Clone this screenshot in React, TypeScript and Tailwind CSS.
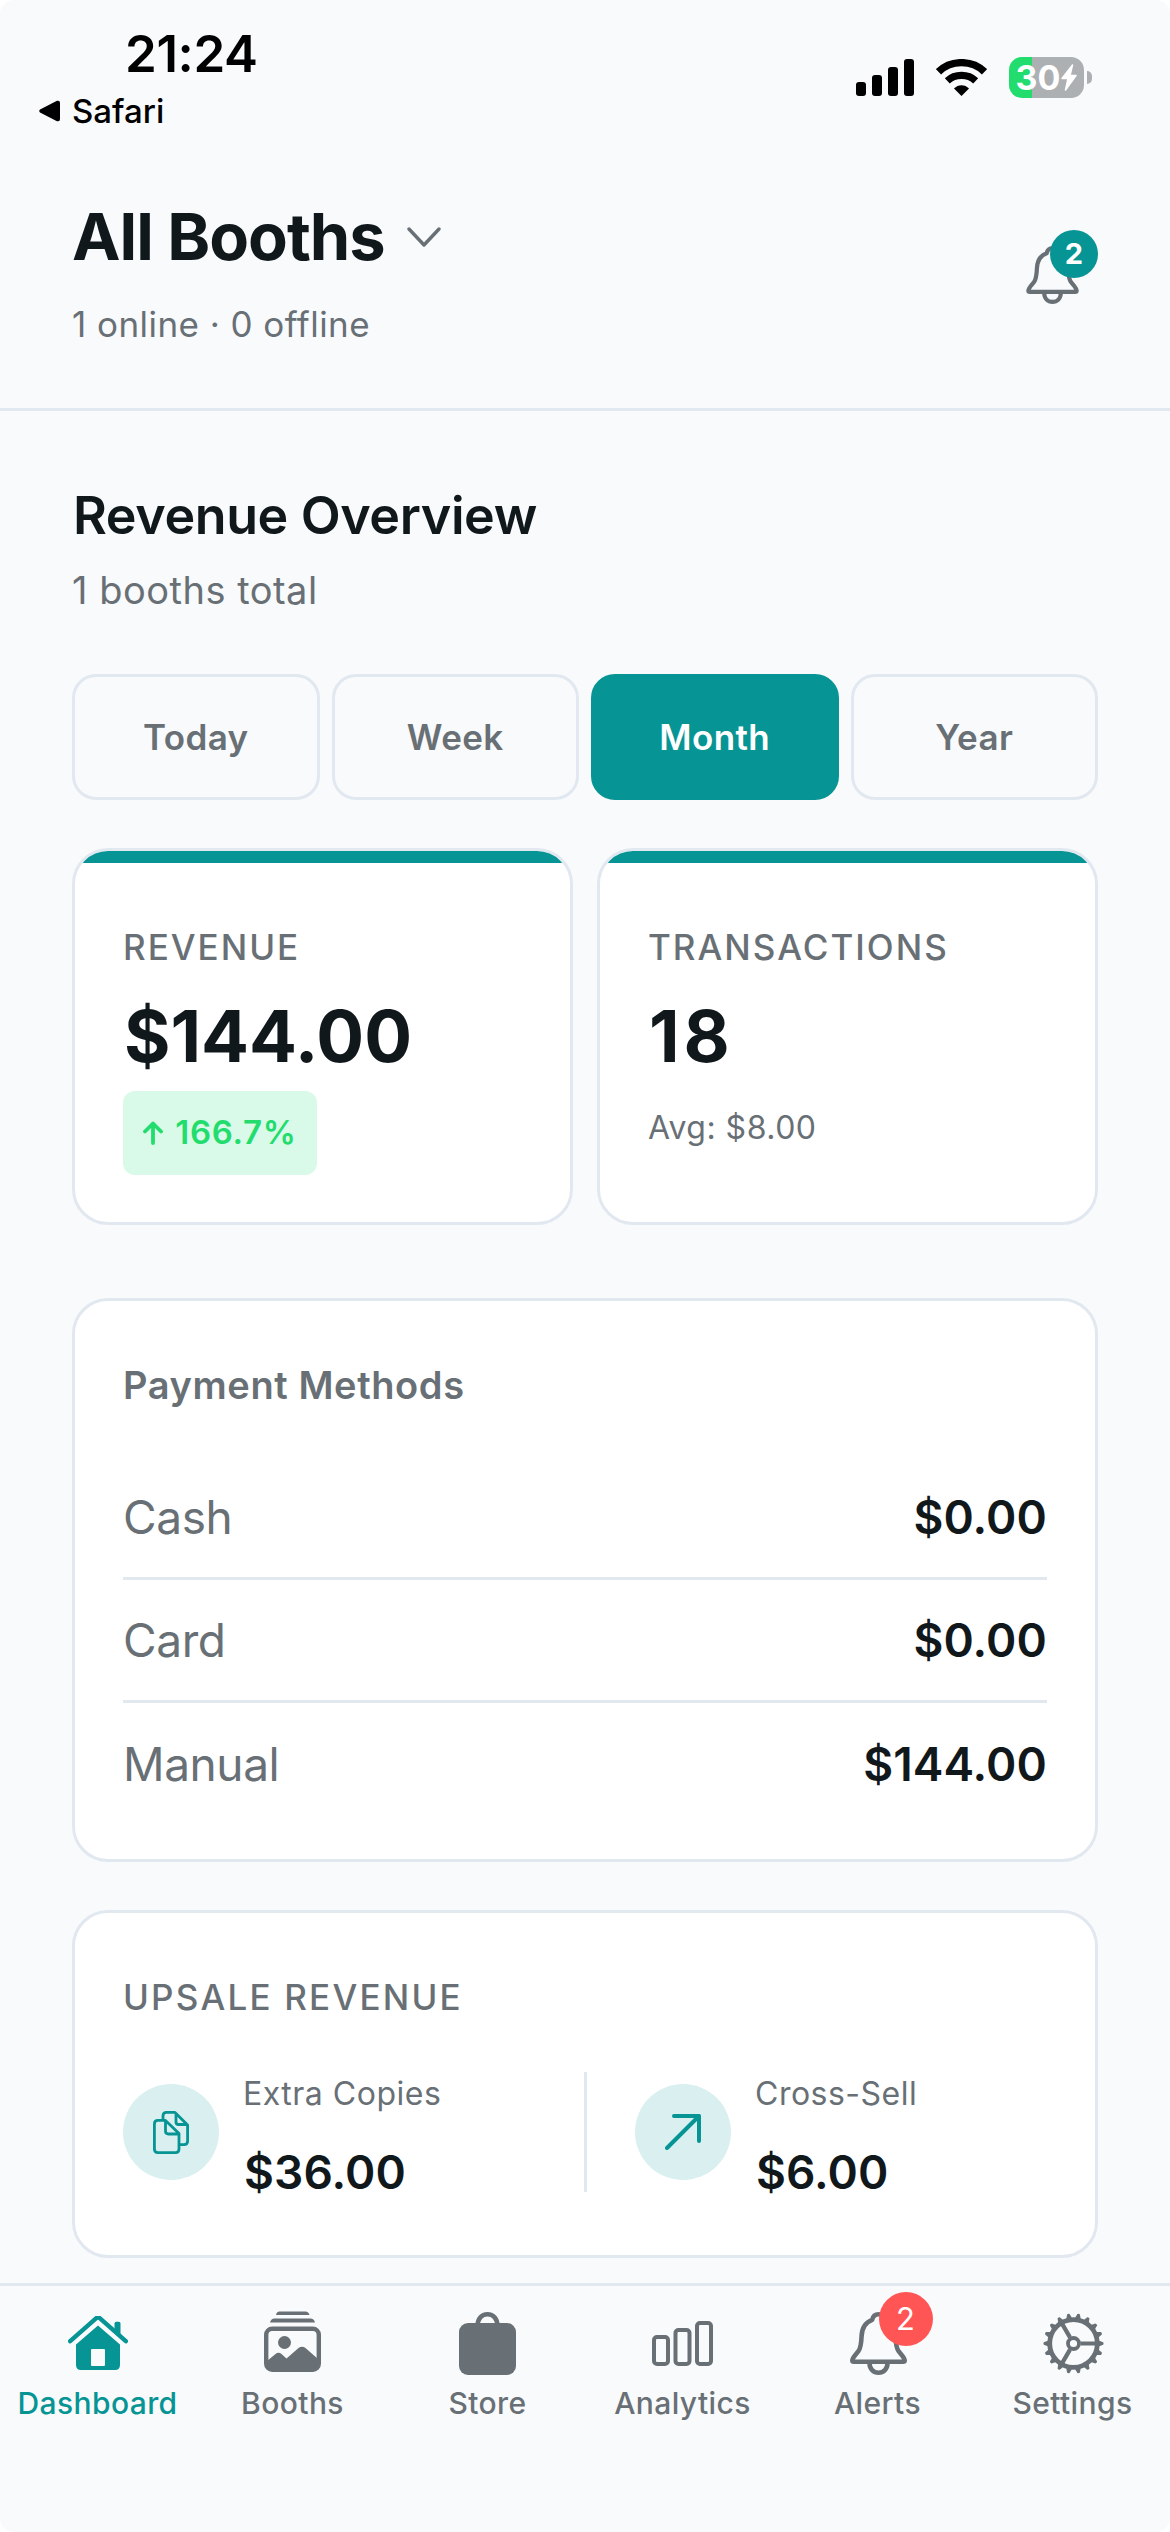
import type { ReactNode } from "react"


const periods = ["Today", "Week", "Month", "Year"]

const payments = [
  { label: "Cash", amount: "$0.00" },
  { label: "Card", amount: "$0.00" },
  { label: "Manual", amount: "$144.00" },
]


function BellIcon({ className }: { className: string }) {
  return (
    <svg viewBox="0 0 57 63" className={className} fill="none" stroke="currentColor" strokeWidth="4.600" strokeLinejoin="round">
      <path d="M28.500 2.300C25 2.300 23 4.300 22.200 7.800C14.500 10.500 12 16.500 11.600 24C11.300 31 11 35.500 8.500 39C6.500 42 2.300 45.500 2.300 48.500Q2.300 49.800 4 49.800H53Q54.700 49.800 54.700 48.500C54.700 45.500 50.500 42 48.500 39C46 35.500 45.700 31 45.400 24C45 16.500 42.500 10.500 34.800 7.800C34 4.300 32 2.300 28.500 2.300Z" />
      <path d="M19.500 51C19.500 57 23.500 60.700 28.500 60.700S37.500 57 37.500 51" />
    </svg>
  )
}


function HomeIcon() {
  return (
    <svg viewBox="0 0 60 54" className="h-[54px] w-[60px]" fill="currentColor">
      <path d="M2.200 25.200L28 2.400Q30 0.800 32 2.400L57.800 25.200" fill="none" stroke="currentColor" strokeWidth="4.400" strokeLinecap="round" strokeLinejoin="round" />
      <path d="M46.500 14V7.500Q46.500 5.800 48.200 5.800H50.800Q52.500 5.800 52.500 7.500V20Z" />
      <path fillRule="evenodd" d="M30 9.500L52 28.500V49Q52 54 47 54H13Q8 54 8 49V28.500ZM24 33Q23 33 23 34V49Q23 50 24 50H36Q37 50 37 49V34Q37 33 36 33Z" />
    </svg>
  )
}


function BoothsIcon() {
  return (
    <svg viewBox="0 0 57 61" className="-mt-[4px] h-[61px] w-[57px]" fill="currentColor">
      <path d="M12 4Q12.500 0.500 15.500 0.500H41.500Q44.500 0.500 45.500 4Z" />
      <path d="M6 11.500Q7 7.500 10.500 7.500H46.500Q50 7.500 51 11.500Z" />
      <rect x="2.200" y="17.800" width="52.600" height="41" rx="6" fill="none" stroke="currentColor" strokeWidth="4.400" />
      <circle cx="20.500" cy="31.500" r="6.500" />
      <path d="M3 50L11.500 43Q14.500 40.500 17.500 43L22.500 47.500L34.500 37Q38 34.500 41.500 37L54 48V55L50 59H7L3 55Z" />
    </svg>
  )
}


function BagIcon() {
  return (
    <svg viewBox="0 0 57 63" className="h-[63px] w-[57px]">
      <path d="M18.500 14C18.500 7 22.500 2.300 28.500 2.300S38.500 7 38.500 14" fill="none" stroke="currentColor" strokeWidth="4.600" />
      <rect y="11" width="57" height="52" rx="9" fill="currentColor" />
    </svg>
  )
}


function ChartIcon() {
  return (
    <svg viewBox="0 0 61 45" className="h-[45px] w-[61px]" fill="none" stroke="currentColor" strokeWidth="4">
      <rect x="2" y="16" width="14" height="27" rx="3" />
      <rect x="23.500" y="9" width="14" height="34" rx="3" />
      <rect x="45" y="2" width="14" height="41" rx="3" />
    </svg>
  )
}


function GearIcon() {
  const teeth = Array.from({ length: 18 }, (_, i) => i * 20)

  return (
    <svg viewBox="-30.5 -30.5 61 61" className="ml-[2px] size-[61px]" fill="none" stroke="currentColor">
      <circle r="23.800" strokeWidth="4.800" />
      <circle r="5.500" strokeWidth="3.800" />
      <path d="M7 0H23M-3.500 -6.100L-11.500 -19.900M-3.500 6.100L-11.500 19.900" strokeWidth="4.200" />
      {teeth.map((a) => (
        <path key={a} d="M24.500 -3.200L29.700 -1.300Q30.500 0 29.700 1.300L24.500 3.200Z" fill="currentColor" stroke="none" transform={`rotate(${a})`} />
      ))}
    </svg>
  )
}


function StatusBar() {
  return (
    <div className="flex h-[150px] justify-between">

      <div className="pt-[23px] text-black">
        <div className="pl-[125px] text-[51px] leading-[61px] font-semibold tracking-[-0.4px]">21:24</div>
        <div className="mt-[7px] flex items-center gap-[12px] pl-[39px] text-[33px] leading-[40px] font-medium">
          <svg viewBox="0 0 21 22" className="h-[22px] w-[21px]">
            <path d="M1 9.500L18 0.800Q21 0 21 3V19Q21 22 18 21.200L1 12.500Q-0.500 11 1 9.500Z" />
          </svg>
          Safari
        </div>
      </div>


      <div className="mt-[57px] flex h-[41px] items-center pr-[78px]">
        <svg viewBox="0 0 58 37" className="h-[37px] w-[58px]">
          <rect y="23" width="10" height="14" rx="3" />
          <rect x="16" y="16" width="10" height="21" rx="3" />
          <rect x="32" y="8" width="10" height="29" rx="3" />
          <rect x="48" width="10" height="37" rx="3" />
        </svg>

        <svg viewBox="0 0 51 37" className="ml-[22px] h-[37px] w-[51px]">
          <path d="M2.500 12.800C15 0.600 36 0.600 48.500 12.800" fill="none" stroke="#000" strokeWidth="7.400" />
          <path d="M11.300 21.900C19 14.600 32 14.600 39.700 21.900" fill="none" stroke="#000" strokeWidth="7.200" />
          <path d="M18 29.500C22 25 29 25 33 29.500L25.500 37Z" />
        </svg>

        <div className="ml-[22px] flex h-[41px] w-[75px] items-center justify-center rounded-[13px] bg-[linear-gradient(to_right,#22dd6e_23px,#adb0b3_23px)] text-[34px] leading-[41px] font-bold text-white">
          30
          <svg viewBox="0 0 16 27" className="ml-[1px] h-[27px] w-[16px]" fill="#fff" stroke="#fff" strokeWidth="1.500" strokeLinejoin="round">
            <path d="M11.500 1L1 14.500H7L4.500 26L15 11.500H9Z" />
          </svg>
        </div>
        <div className="ml-[3px] h-[13px] w-[5px] rounded-r-full bg-[#adb0b3]" />
      </div>

    </div>
  )
}


function StatCard({ title, value, children }: { title: string, value: ReactNode, children: ReactNode }) {
  return (
    <div className="h-[377px] flex-1 overflow-hidden rounded-[36px] border-3 border-[#e2e8f0] bg-white">
      <div className="h-[12px] bg-[#069494]" />
      <div className="px-[48px] pt-[60px]">
        <div className="text-[35px] leading-[48px] font-medium tracking-[2px] text-[#687076]">{title}</div>
        <div className="mt-[25px] pl-[1px] text-[71px] leading-[80px] font-bold text-[#11181c]">{value}</div>
        {children}
      </div>
    </div>
  )
}


function UpsaleItem({ icon, label, amount }: { icon: ReactNode, label: string, amount: string }) {
  return (
    <div className="flex h-[120px] items-center">
      <div className="flex size-[96px] items-center justify-center rounded-full bg-[#daefef] text-[#069494]">{icon}</div>
      <div className="mt-[9px] ml-[24px]">
        <div className="text-[32px] leading-[44px] tracking-[0.5px] text-[#687076]">{label}</div>
        <div className="mt-[26px] pl-[1px] text-[46px] leading-[60px] font-semibold tracking-[0.1px] text-[#11181c]">{amount}</div>
      </div>
    </div>
  )
}


export default function App() {

  const tabs = [
    { label: "Dashboard", icon: <HomeIcon /> },
    { label: "Booths", icon: <BoothsIcon /> },
    { label: "Store", icon: <BagIcon /> },
    { label: "Analytics", icon: <ChartIcon /> },
    { label: "Alerts", icon: <BellIcon className="ml-[1px] h-[63px] w-[57px]" />, badge: 2 },
    { label: "Settings", icon: <GearIcon /> },
  ]


  return (
    <main className="flex h-[2532px] w-[1170px] flex-col overflow-hidden rounded-[14px] bg-[#f9fafc] font-['Inter',sans-serif]">

      <StatusBar />


      {/* Booth picker */}
      <header className="flex h-[261px] justify-between border-b-3 border-[#e2e8f0] px-[72px] pt-[47px]">
        <div>
          <div className="flex items-center">
            <h1 className="text-[65px] leading-[80px] font-bold tracking-[-1px] text-[#11181c]">All Booths</h1>
            <svg viewBox="0 0 34 20" className="ml-[22px] h-[20px] w-[34px]" fill="none" stroke="#687076" strokeWidth="3.400" strokeLinecap="round" strokeLinejoin="round">
              <path d="M2 2L17 18L32 2" />
            </svg>
          </div>
          <p className="mt-[22px] text-[35px] leading-[50px] tracking-[0.45px] text-[#687076]">1 online · 0 offline</p>
        </div>

        <div className="relative mt-[49px] mr-[19px] h-[58px] w-[53px] text-[#687076]">
          <BellIcon className="h-[58px] w-[53px]" />
          <span className="absolute -top-[16px] left-[24px] flex size-[48px] items-center justify-center rounded-full bg-[#069494] text-[29px] font-bold text-white">2</span>
        </div>
      </header>


      <section className="h-[1872px] px-[72px] pt-[70px]">

        <h2 className="pl-[1px] text-[52px] leading-[70px] font-semibold tracking-[-0.4px] text-[#11181c]">Revenue Overview</h2>
        <p className="mt-[14px] text-[38px] leading-[50px] tracking-[0.5px] text-[#687076]">1 booths total</p>


        <div className="mt-[59px] flex gap-[12px]">
          {periods.map((p) => (
            <button
              key={p}
              className={
                p === "Month"
                  ? "h-[126px] flex-1 rounded-[24px] border-3 border-[#069494] bg-[#069494] text-[35px] font-semibold tracking-[0.4px] text-white"
                  : "h-[126px] flex-1 rounded-[24px] border-3 border-[#e2e8f0] text-[35px] font-semibold tracking-[0.4px] text-[#687076]"
              }
            >
              {p}
            </button>
          ))}
        </div>


        <div className="mt-[48px] flex gap-[24px]">
          <StatCard title="REVENUE" value="$144.00">
            <div className="mt-[15px] flex h-[84px] w-[194px] items-center justify-center rounded-[12px] bg-[#dafae9] text-[33px] font-semibold tracking-[0.7px] text-[#22dd6e]">
              <svg viewBox="0 0 20 24" className="mr-[12px] h-[24px] w-[20px]" fill="none" stroke="currentColor" strokeWidth="3.800" strokeLinecap="round" strokeLinejoin="round">
                <path d="M10 22V2.500M2 10.500L10 2.500L18 10.500" />
              </svg>
              166.7%
            </div>
          </StatCard>

          <StatCard title="TRANSACTIONS" value={<span className="tracking-[4px]">18</span>}>
            <div className="mt-[28px] text-[32px] leading-[48px] tracking-[0.5px] text-[#687076]">Avg: $8.00</div>
          </StatCard>
        </div>


        {/* Payment methods */}
        <div className="mt-[73px] h-[564px] rounded-[36px] border-3 border-[#e2e8f0] bg-white px-[48px] pt-[48px]">
          <h3 className="text-[38px] leading-[72px] font-semibold tracking-[0.6px] text-[#687076]">Payment Methods</h3>
          <div className="mt-[36px] divide-y-3 divide-[#e2e8f0]">
            {payments.map((row) => (
              <div key={row.label} className="flex h-[123px] items-center justify-between text-[46px]">
                <span className="tracking-[-0.4px] text-[#687076]">{row.label}</span>
                <span className="font-semibold tracking-[0.1px] text-[#11181c]">{row.amount}</span>
              </div>
            ))}
          </div>
        </div>


        {/* Upsale revenue */}
        <div className="mt-[48px] h-[348px] rounded-[36px] border-3 border-[#e2e8f0] bg-white px-[48px] pt-[60px]">
          <h3 className="text-[35px] leading-[48px] font-medium tracking-[2.200px] text-[#687076]">UPSALE REVENUE</h3>
          <div className="mt-[51px] grid h-[120px] grid-cols-[461px_1fr]">
            <UpsaleItem
              label="Extra Copies"
              amount="$36.00"
              icon={
                <svg viewBox="0 0 36 43" className="h-[43px] w-[36px]" fill="none" stroke="currentColor" strokeWidth="2.800" strokeLinejoin="round">
                  <path d="M10 9V5Q10 1.400 13.500 1.400H22L34.600 14V30Q34.600 33.600 31 33.600H27M23 2V11Q23 13.500 25.500 13.500H34" />
                  <path d="M5 9.400H12.500L26 22.500V38Q26 41.600 22.500 41.600H5Q1.400 41.600 1.400 38V13Q1.400 9.400 5 9.400ZM12.500 10V20Q12.500 23 15.500 23H25.500" />
                </svg>
              }
            />
            <div className="flex border-l-3 border-[#e2e8f0] pl-[48px]">
              <UpsaleItem
                label="Cross-Sell"
                amount="$6.00"
                icon={
                  <svg viewBox="0 0 36 36" className="h-[36px] w-[36px]" fill="none" stroke="currentColor" strokeWidth="4" strokeLinecap="round" strokeLinejoin="round">
                    <path d="M2 34L34 2M9 2H34V27" />
                  </svg>
                }
              />
            </div>
          </div>
        </div>

      </section>


      <nav className="flex flex-1 border-t-3 border-[#e2e8f0]">
        {tabs.map((tab) => (
          <div
            key={tab.label}
            className={tab.label === "Dashboard" ? "flex w-[195px] flex-col items-center text-[#069494]" : "flex w-[195px] flex-col items-center text-[#687076]"}
          >
            <div className="relative mt-[20px] flex h-[74px] items-center">
              {tab.icon}
              {tab.badge && (
                <span className="absolute -top-[14px] left-[30px] flex size-[54px] items-center justify-center rounded-full bg-[#ff5555] text-[31px] text-white">{tab.badge}</span>
              )}
            </div>
            <span className="mt-[3px] text-[30px] leading-[40px] font-medium tracking-[0.4px]">{tab.label}</span>
          </div>
        ))}
      </nav>

    </main>
  )
}
